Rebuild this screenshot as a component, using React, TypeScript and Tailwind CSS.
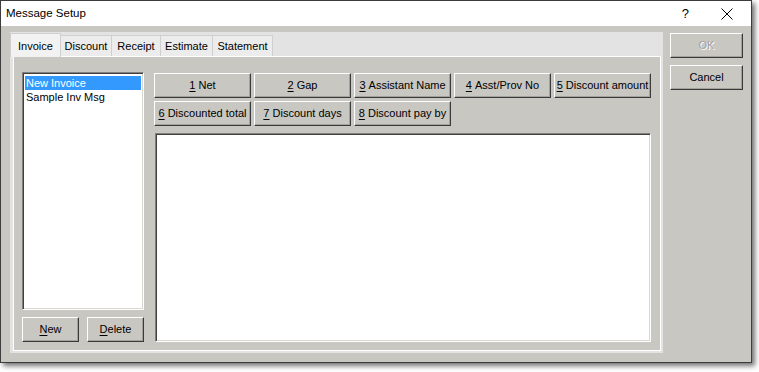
import React from "react";

const FACE = "bg-[#c9c7c2]";

function Btn({
  children,
  className = "",
}: {
  children: React.ReactNode;
  className?: string;
}) {
  return (
    <div
      className={`h-[25px] flex items-center justify-center whitespace-nowrap ${FACE} border border-t-white border-l-white border-b-[#3a3a3a] border-r-[#3a3a3a] shadow-[inset_-1px_-1px_0_#a3a19c] text-[11px] text-black ${className}`}
    >
      {children}
    </div>
  );
}

function U({ children }: { children: React.ReactNode }) {
  return <span className="underline underline-offset-[2px]">{children}</span>;
}

const tabs = ["Invoice", "Discount", "Receipt", "Estimate", "Statement"];
const tabW = [51, 51, 49, 52, 60];

export default function App() {
  return (
    <div className="w-[759px] h-[372px] bg-white relative font-['Liberation_Sans',Arial,sans-serif] text-[11px] text-black overflow-hidden">
      <div
        className={`w-[752px] h-[363px] border border-[#3c3c3c] ${FACE} flex flex-col shadow-[3px_3px_5px_rgba(0,0,0,0.55)]`}
      >
        {/* Title bar */}
        <div className="h-[25px] bg-white flex items-center pl-[5px] shrink-0">
          <span className="text-[11.5px]">Message Setup</span>
          <span className="ml-auto mr-[32px] text-[13px]">?</span>
          <svg width="12" height="12" viewBox="0 0 12 12" className="mr-[18px]">
            <path d="M0.5 0.5 L11.5 11.5 M11.5 0.5 L0.5 11.5" stroke="#000" strokeWidth="1" fill="none" />
          </svg>
        </div>

        {/* Body */}
        <div className="flex-1 flex pt-[6px] pl-[9px]">
          {/* Tab control */}
          <div className="w-[653px] h-[321px] flex flex-col bg-[#e3e3e3]">
            <div className="h-[24px] flex items-end shrink-0">
              {tabs.map((t, i) =>
                i === 0 ? (
                  <div
                    key={t}
                    style={{ width: tabW[i] }}
                    className="h-[24px] bg-[#f2f2f2] border border-b-0 border-[#cfcfcf] flex items-start justify-center pt-[4px] relative z-10 -mb-[1px]"
                  >
                    {t}
                  </div>
                ) : (
                  <div
                    key={t}
                    style={{ width: tabW[i] }}
                    className="h-[21px] bg-[#ececec] border border-l-0 border-b-0 border-[#cfcfcf] flex items-center justify-center"
                  >
                    {t}
                  </div>
                )
              )}
            </div>
            <div className={`flex-1 ml-[3px] mr-[2px] mb-[2px] border border-white ${FACE} flex pt-[15px] pl-[8px]`}>
              {/* Left column */}
              <div className="w-[122px] flex flex-col">
                <div className="h-[238px] bg-white border border-t-[#808080] border-l-[#808080] border-b-white border-r-white shadow-[inset_1px_1px_0_#404040,inset_-1px_-1px_0_#d8d6d1] p-[2px]">
                  <div className="h-[14px] bg-[#3399ff] text-white pl-[1px] leading-[14px] mt-[1px]">
                    New Invoice
                  </div>
                  <div className="h-[14px] pl-[1px] leading-[14px]">Sample Inv Msg</div>
                </div>
                <div className="flex gap-[8px] mt-[7px]">
                  <Btn className="w-[57px]">
                    <U>N</U>ew
                  </Btn>
                  <Btn className="w-[57px]">
                    <U>D</U>elete
                  </Btn>
                </div>
              </div>
              {/* Right column */}
              <div className="ml-[10px] flex flex-col pt-[1px]">
                <div className="flex gap-[3px]">
                  <Btn className="w-[97px]"><U>1</U>&nbsp;Net</Btn>
                  <Btn className="w-[97px]"><U>2</U>&nbsp;Gap</Btn>
                  <Btn className="w-[97px]"><U>3</U>&nbsp;Assistant Name</Btn>
                  <Btn className="w-[97px]"><U>4</U>&nbsp;Asst/Prov No</Btn>
                  <Btn className="w-[97px]"><U>5</U>&nbsp;Discount amount</Btn>
                </div>
                <div className="flex gap-[3px] mt-[3px]">
                  <Btn className="w-[97px]"><U>6</U>&nbsp;Discounted total</Btn>
                  <Btn className="w-[97px]"><U>7</U>&nbsp;Discount days</Btn>
                  <Btn className="w-[97px]"><U>8</U>&nbsp;Discount pay by</Btn>
                </div>
                <div className="ml-[1px] mt-[7px] w-[496px] h-[209px] bg-white border border-t-[#808080] border-l-[#808080] border-b-white border-r-white shadow-[inset_1px_1px_0_#404040,inset_-1px_-1px_0_#d8d6d1]" />
              </div>
            </div>
          </div>

          {/* OK / Cancel */}
          <div className="ml-[7px] pt-[1px] flex flex-col gap-[7px]">
            <Btn className="w-[73px]">
              <span className="text-[#a3a3a3] [text-shadow:1px_1px_0_#ffffff]">OK</span>
            </Btn>
            <Btn className="w-[73px]">Cancel</Btn>
          </div>
        </div>
      </div>
    </div>
  );
}
